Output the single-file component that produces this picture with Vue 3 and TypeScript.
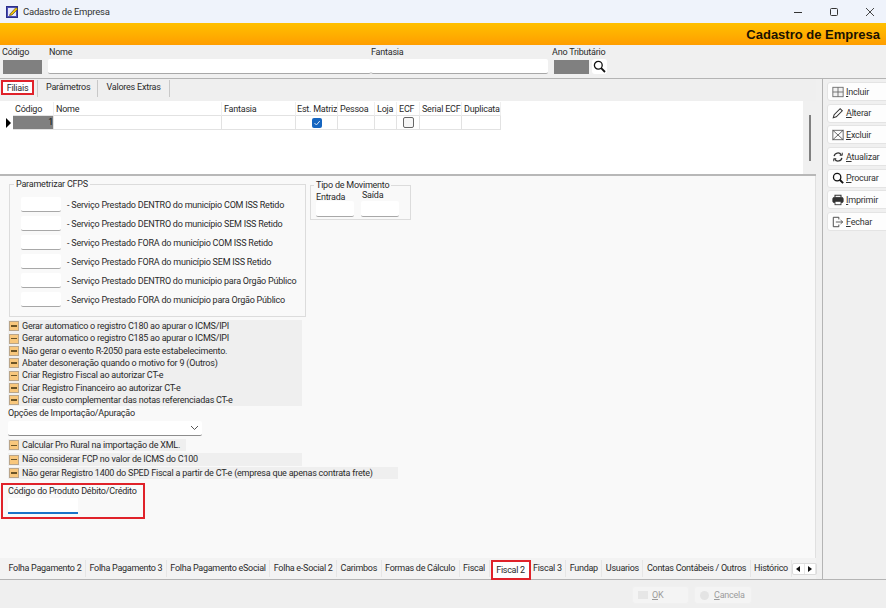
<script setup lang="ts">
const columns = ['Código', 'Nome', 'Fantasia', 'Est. Matriz', 'Pessoa', 'Loja', 'ECF', 'Serial ECF', 'Duplicata']
const cfps = [
  '- Serviço Prestado DENTRO do município COM ISS Retido',
  '- Serviço Prestado DENTRO do município SEM ISS Retido',
  '- Serviço Prestado FORA do município COM ISS Retido',
  '- Serviço Prestado FORA do município SEM ISS Retido',
  '- Serviço Prestado DENTRO do município para Orgão Público',
  '- Serviço Prestado FORA do município para Orgão Público',
]
const checks = [
  'Gerar automatico o registro C180 ao apurar o ICMS/IPI',
  'Gerar automatico o registro C185 ao apurar o ICMS/IPI',
  'Não gerar o evento R-2050 para este estabelecimento.',
  'Abater desoneração quando o motivo for 9 (Outros)',
  'Criar Registro Fiscal ao autorizar CT-e',
  'Criar Registro Financeiro ao autorizar CT-e',
  'Criar custo complementar das notas referenciadas CT-e',
]
const tabs = ['Folha Pagamento 2', 'Folha Pagamento 3', 'Folha Pagamento eSocial', 'Folha e-Social 2', 'Carimbos', 'Formas de Cálculo', 'Fiscal', 'Fiscal 2', 'Fiscal 3', 'Fundap', 'Usuarios', 'Contas Contábeis / Outros', 'Histórico']
const actions = [
  { first: 'I', rest: 'ncluir', icon: 'add' },
  { first: 'A', rest: 'lterar', icon: 'edit' },
  { first: 'E', rest: 'xcluir', icon: 'del' },
  { first: 'A', rest: 'tualizar', icon: 'ref' },
  { first: 'P', rest: 'rocurar', icon: 'find' },
  { first: 'I', rest: 'mprimir', icon: 'print' },
  { first: 'F', rest: 'echar', icon: 'exit' },
]
</script>

<template>
  <div class="app">
    <header class="title">
      <svg class="app-icon" width="13" height="13" viewBox="0 0 13 13">
        <rect x="0.5" y="1.5" width="11" height="11" fill="#4a4fb5" stroke="#2b2f8a" />
        <rect x="2" y="3" width="8" height="8" fill="#e8e8f8" />
        <path d="M4 9 L10 2.5 L12 4 L6 10 L3.5 10.5 Z" fill="#f2c200" stroke="#333" stroke-width="0.6" />
      </svg>
      <span class="title-text">Cadastro de Empresa</span>
      <div class="win">
        <svg width="10" height="10" viewBox="0 0 10 10"><path d="M1 5.5 H9" stroke="#333" stroke-width="1" /></svg>
        <svg width="10" height="10" viewBox="0 0 10 10"><rect x="1.5" y="1.5" width="7" height="7" rx="1" fill="none" stroke="#333" /></svg>
        <svg width="10" height="10" viewBox="0 0 10 10"><path d="M1 1 L9 9 M9 1 L1 9" stroke="#333" stroke-width="0.9" /></svg>
      </div>
    </header>
    <div class="banner">Cadastro de Empresa</div>

    <section class="head">
      <div class="hf f-cod"><label>Código</label><div class="gray"></div></div>
      <div class="hf f-nome"><label>Nome</label><div class="input"></div></div>
      <div class="hf f-fan"><label>Fantasia</label><div class="input"></div></div>
      <div class="hf f-ano">
        <label>Ano Tributário</label>
        <div class="ano-row">
          <div class="gray ano-gray"></div>
          <div class="search">
            <svg width="13" height="13" viewBox="0 0 13 13"><circle cx="5.3" cy="5.3" r="3.9" fill="none" stroke="#111" stroke-width="1.3" /><path d="M8.2 8.2 L12 12" stroke="#111" stroke-width="1.8" /></svg>
          </div>
        </div>
      </div>
    </section>

    <div class="main">
      <div class="left">
        <nav class="top-tabs">
          <span class="tt active">Filiais</span>
          <span class="tt t2">Parâmetros</span>
          <span class="tt t3">Valores Extras</span>
        </nav>
        <div class="grid">
          <div class="table">
            <div class="tr thead">
              <span class="ind"></span>
              <span v-for="c in columns" :key="c" class="th">{{ c }}</span>
            </div>
            <div class="tr tbody">
              <span class="ind"><i class="arrow"></i></span>
              <span class="td cod">1</span>
              <span class="td"></span>
              <span class="td"></span>
              <span class="td center">
                <svg width="10" height="10" viewBox="0 0 10 10"><rect width="10" height="10" rx="2" fill="#1565c0" /><path d="M2.5 5 L4.4 7 L7.8 3" fill="none" stroke="#cfe0f5" stroke-width="1" /></svg>
              </span>
              <span class="td"></span>
              <span class="td"></span>
              <span class="td center"><i class="cbox"></i></span>
              <span class="td"></span>
              <span class="td"></span>
            </div>
          </div>
          <div class="scroll"><i class="thumb"></i></div>
        </div>

        <div class="content">
          <div class="groups">
            <fieldset class="cfps">
              <legend>Parametrizar CFPS</legend>
              <div v-for="t in cfps" :key="t" class="cfps-row">
                <div class="input cfps-input"></div>
                <span>{{ t }}</span>
              </div>
            </fieldset>
            <fieldset class="mov">
              <legend>Tipo de Movimento</legend>
              <div class="mov-grid">
                <label>Entrada</label>
                <label class="saida">Saída</label>
                <div class="input"></div>
                <div class="input"></div>
              </div>
            </fieldset>
          </div>

          <div class="checks">
            <div v-for="c in checks" :key="c" class="chk"><i class="box"></i>{{ c }}</div>
          </div>

          <label class="opt-label">Opções de Importação/Apuração</label>
          <div class="select">
            <svg width="9" height="6" viewBox="0 0 9 6"><path d="M1 1 L4.5 4.5 L8 1" fill="none" stroke="#555" /></svg>
          </div>

          <div class="chk c-a"><i class="box"></i>Calcular Pro Rural na importação de XML.</div>
          <div class="chk c-b"><i class="box"></i>Não considerar FCP no valor de ICMS do C100</div>
          <div class="chk c-c"><i class="box"></i>Não gerar Registro 1400 do SPED Fiscal a partir de CT-e (empresa que apenas contrata frete)</div>

          <div class="prod">
            <label>Código do Produto Débito/Crédito</label>
            <div class="prod-input"></div>
          </div>
        </div>

        <nav class="bottom-tabs">
          <span v-for="t in tabs" :key="t" class="bt" :class="{ on: t === 'Fiscal 2' }">{{ t }}</span>
          <span class="arrows">
            <i><svg width="5" height="6" viewBox="0 0 5 6"><path d="M4 0 V6 L0 3 Z" fill="#111" /></svg></i>
            <i><svg width="5" height="6" viewBox="0 0 5 6"><path d="M1 0 V6 L5 3 Z" fill="#111" /></svg></i>
          </span>
        </nav>
      </div>

      <aside class="side">
        <button v-for="a in actions" :key="a.first + a.rest" class="act" type="button">
          <svg class="ico" width="12" height="12" viewBox="0 0 14 14" fill="none" stroke="#333">
            <template v-if="a.icon === 'add'">
              <rect x="1" y="1.5" width="12" height="11" fill="#f2f2f2" stroke="#666" /><path d="M7 1.5 V12.5 M1 7 H13" stroke="#666" />
            </template>
            <path v-else-if="a.icon === 'edit'" d="M1.5 12.5 L2.5 9 L9.5 2 L12 4.5 L5 11.5 Z" stroke-width="1.2" />
            <template v-else-if="a.icon === 'del'">
              <rect x="1" y="1.5" width="12" height="11" stroke="#555" /><path d="M1 1.5 L13 12.5 M13 1.5 L1 12.5" stroke="#555" />
            </template>
            <template v-else-if="a.icon === 'ref'">
              <path d="M2.5 6 A4.5 4.5 0 0 1 10.8 4.5 M11.5 8 A4.5 4.5 0 0 1 3.2 9.5" stroke-width="1.5" /><path d="M9 5 H12 V2 M5 9 H2 V12" stroke-width="1.1" />
            </template>
            <template v-else-if="a.icon === 'find'">
              <circle cx="6" cy="6" r="4.3" stroke="#111" stroke-width="1.5" /><path d="M9 9 L13 13" stroke="#111" stroke-width="2.2" />
            </template>
            <template v-else-if="a.icon === 'print'">
              <path d="M3.5 4 V1.5 H10.5 V4" stroke-width="1.2" /><rect x="1" y="4" width="12" height="6" rx="1.5" fill="#333" /><rect x="3.5" y="8.5" width="7" height="4" fill="#fff" stroke="#333" />
            </template>
            <template v-else>
              <path d="M8 4 V1.5 H1.5 V12.5 H8 V10" stroke="#444" stroke-width="1.1" /><path d="M4.5 7 H12.5 M10 4.8 L12.5 7 L10 9.2" stroke="#444" />
            </template>
          </svg>
          <span class="act-text"><u>{{ a.first }}</u>{{ a.rest }}</span>
        </button>
      </aside>
    </div>

    <footer class="foot">
      <button class="dis ok" type="button"><i class="d-square"></i><span><u>O</u>K</span></button>
      <button class="dis cancel" type="button"><i class="d-circle"></i><span><u>C</u>ancela</span></button>
    </footer>
  </div>
</template>

<style>
body { margin: 0; background: #f0f0f0; }
</style>

<style scoped>
.app {
  width: 886px; height: 608px; overflow: hidden; display: flex; flex-direction: column;
  background: #f0f0f0; color: #2a2a2a;
  font-family: Roboto, "Liberation Sans", Arial, sans-serif; font-size: 9px; line-height: 12px; letter-spacing: -0.22px;
}
label { display: block; white-space: nowrap; }
.title { height: 23px; flex: none; display: flex; align-items: center; background: #eff3fb; padding-left: 6px; box-sizing: border-box; }
.app-icon { margin-right: 4px; }
.title-text { font-size: 9.5px; color: #333; }
.win { margin-left: auto; display: flex; gap: 26px; padding-right: 11px; align-items: center; }
.banner {
  height: 22px; flex: none; box-sizing: border-box; text-align: right; padding-right: 6px; letter-spacing: 0;
  background: linear-gradient(#ffc000, #ff9e00); font: bold 13px/24px "Liberation Sans", Arial, sans-serif; color: #1a1200;
}
.head { height: 34px; flex: none; display: flex; box-sizing: border-box; padding: 1px 0 0 3px; border-bottom: 1px solid #b4b4b4; background: #f0f0f0; }
.hf label { height: 13px; line-height: 13px; }
.f-cod { width: 45px; }
.f-cod label { margin-left: -1px; }
.gray { background: #808080; height: 14px; width: 39px; margin-top: 1px; }
.f-nome { width: 323px; }
.f-nome label { margin-left: 1px; }
.input { background: #fff; height: 15px; box-sizing: border-box; border-bottom: 1px solid #a8a8a8; border-radius: 2px; }
.f-fan { width: 177px; }
.f-ano { margin-left: 4px; }
.ano-row { display: flex; gap: 3px; padding-left: 2px; }
.ano-gray { width: 35px; }
.search { width: 15px; height: 15px; background: #fff; border-radius: 3px; display: flex; align-items: center; justify-content: center; }
.main { height: 500px; flex: none; display: flex; }
.left { width: 816px; flex: none; display: flex; flex-direction: column; }
.side { margin-left: 6px; flex: 1; border-left: 1px solid #b4b4b4; display: flex; flex-direction: column; padding: 3px 0 0 4px; gap: 2.7px; }
.act {
  width: 62px; height: 19px; flex: none; padding: 0 0 0 4px; display: flex; align-items: center; background: #fdfdfd;
  border: 1px solid #e4e4e4; border-radius: 3px; font: inherit; letter-spacing: inherit; color: #333; text-align: left;
}
.ico { margin-right: 2px; flex: none; }
.act-text { white-space: nowrap; }
.top-tabs { height: 22px; flex: none; display: flex; align-items: flex-start; padding: 1px 0 0 1px; box-sizing: border-box; background: #efefef; }
.tt { height: 15px; line-height: 14px; box-sizing: border-box; white-space: nowrap; }
.tt.active { width: 33px; text-align: center; border: 2px solid #e0222a; background: #fff; line-height: 12px; }
.t2, .t3 { border-right: 1px solid #c8c8c8; border-left: 1px solid #c8c8c8; height: 17px; line-height: 15px; }
.t2 { margin-left: 3px; padding: 0 7px 0 8px; }
.t3 { padding: 0 8px 0 8px; border-left: none; }
.grid { height: 75px; flex: none; box-sizing: border-box; display: flex; background: #fff; border-bottom: 2px solid #b8b8b8; }
.table { flex: 1; }
.tr { display: grid; grid-template-columns: 13px 41px 168px 74px 42px 37px 22px 23px 42px 39px; width: 501px; }
.thead { height: 14px; line-height: 14px; margin-top: 1px; }
.th { padding-left: 2px; border-right: 1px solid #efefef; border-bottom: 1px solid #e2e2e2; white-space: nowrap; overflow: hidden; }
.th:nth-child(5) { padding-left: 1px; }
.tbody { height: 14px; }
.td { border-right: 1px solid #e2e2e2; border-bottom: 1px solid #e2e2e2; display: block; }
.td.center { display: flex; align-items: center; justify-content: center; }
.cod { background: #808080; text-align: right; line-height: 13px; color: #111; }
.ind { display: flex; align-items: center; padding-left: 6px; }
.arrow { width: 0; height: 0; border-left: 5px solid #000; border-top: 5px solid transparent; border-bottom: 5px solid transparent; }
.cbox { width: 9px; height: 9px; border: 1px solid #666; border-radius: 2px; background: #f6f6f6; display: block; }
.scroll { width: 13px; flex: none; background: #f0f0f0; display: flex; justify-content: center; padding-top: 14px; box-sizing: border-box; }
.thumb { width: 2px; height: 46px; background: #808080; display: block; }
.content { flex: none; height: 382px; box-sizing: border-box; background: #f9f9f9; padding-left: 8px; border-right: 1px solid #e0e0e0; }
.groups { display: flex; align-items: flex-start; height: 142px; padding-top: 3px; box-sizing: border-box; }
fieldset { margin: 0; padding: 0; border: 1px solid #dcdcdc; box-sizing: border-box; min-width: 0; }
legend { padding: 0 2px; margin-left: -7px; line-height: 12px; }
.cfps { width: 297px; height: 139px; padding: 5px 0 0 11px; margin: -1px 0 0 1px; }
.cfps-row { display: flex; align-items: center; height: 19px; }
.cfps-row span { margin-left: 6px; white-space: nowrap; }
.cfps-input { width: 40px; flex: none; }
.mov { width: 101px; height: 41px; margin-left: 4px; padding: 0 0 0 5px; }
.mov legend { margin-left: -2px; }
.mov-grid { display: grid; grid-template-columns: 38px 38px; column-gap: 7px; grid-template-rows: 10px 16px; }
.mov-grid .input { height: 16px; }
.saida { margin-left: 1px; margin-top: -2px; }
.checks { margin-top: 2px; width: 294px; }
.chk { height: 12.35px; line-height: 12.35px; background: #efefef; display: flex; align-items: center; white-space: nowrap; padding-left: 1px; box-sizing: border-box; }
.box { width: 10px; height: 10px; box-sizing: border-box; flex: none; margin-right: 3px; background: #f8c77c; border: 1px solid #b9a58a; display: block; }
.box::after { content: ""; display: block; height: 1.5px; background: #6b5426; margin: 3.2px 1px 0; }
.opt-label { margin-top: 1px; height: 12px; }
.select { width: 194px; height: 15px; margin-top: 2px; box-sizing: border-box; background: #fff; border-bottom: 1px solid #8d8d8d; display: flex; align-items: center; justify-content: flex-end; padding-right: 3px; border-radius: 2px; }
.c-a { width: 178px; margin-top: 3px; height: 12px; }
.c-b { width: 294px; margin-top: 2px; }
.c-c { width: 390px; margin-top: 1px; }
.prod { margin-top: 4px; margin-left: -7px; width: 144px; height: 36px; box-sizing: border-box; border: 2px solid #e0222a; padding: 0 0 0 5px; }
.prod-input { width: 70px; height: 16px; background: #fff; border-bottom: 2px solid #1a73c8; box-sizing: border-box; margin-top: 1px; }
.bottom-tabs { height: 21px; flex: none; display: flex; align-items: center; background: #f3f3f3; padding-left: 5px; box-sizing: border-box; white-space: nowrap; position: relative; }
.bt { padding: 0 3.5px; border-right: 1px solid #e6e6e6; height: 17px; line-height: 17px; letter-spacing: -0.28px; }
.bt.on { box-sizing: border-box; width: 40px; height: 20px; margin: 2px -1px 0 1px; padding: 0; text-align: center; border: 2px solid #e0222a; background: #fff; line-height: 17px; }
.arrows { position: absolute; left: 792px; top: 5px; display: flex; border: 1px solid #dcdcdc; border-radius: 2px; background: #fff; }
.arrows i { width: 10.5px; height: 10px; display: flex; align-items: center; justify-content: center; border-right: 1px solid #e6e6e6; }
.foot { height: 29px; flex: none; box-sizing: border-box; border-top: 1px solid #b4b4b4; display: flex; padding: 6px 0 0 632px; gap: 5px; background: #efefef; }
.dis { height: 18px; width: 57px; background: #f4f4f4; border: 1px solid #f0f0f0; border-radius: 3px; display: flex; align-items: center; padding: 0 0 0 5px; font: inherit; letter-spacing: inherit; color: #9c9c9c; }
.cancel { width: 58px; }
.d-square { width: 10px; height: 8px; background: #e6e6e6; margin-right: 4px; display: block; }
.d-circle { width: 9px; height: 9px; border-radius: 50%; background: #e4e4e4; margin-right: 5px; display: block; }
</style>
